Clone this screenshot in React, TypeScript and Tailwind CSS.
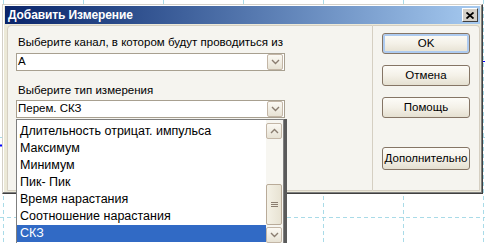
import React from 'react';

const font = { fontFamily: '"Liberation Sans", Arial, sans-serif' };

const Chevron = ({ up = false }: { up?: boolean }) => (
  <svg width="9" height="6" viewBox="0 0 9 6" className="block">
    <path
      d={up ? 'M1 5 L4.5 1.5 L8 5' : 'M1 1 L4.5 4.5 L8 1'}
      fill="none"
      stroke="#8a7d70"
      strokeWidth="1.4"
    />
  </svg>
);

const ArrowBox = ({ up = false, className = '' }: { up?: boolean; className?: string }) => (
  <div
    className={`flex items-center justify-center w-[16px] h-[16px] rounded-[2px] border border-[#c3b6a6] bg-gradient-to-b from-[#fbf9f3] to-[#e7e2d4] ${className}`}
  >
    <Chevron up={up} />
  </div>
);

const Select = ({ value }: { value: string }) => (
  <div className="flex items-center h-[18px] w-[269px] border border-[#a8a090] bg-white pl-[1px] pr-[1px]">
    <span className="flex-1 text-[11.5px] text-black leading-none">{value}</span>
    <ArrowBox />
  </div>
);

const Btn = ({ label, focus = false, h = 'h-[21px]' }: { label: string; focus?: boolean; h?: string }) => (
  <div
    className={`flex items-center justify-center w-[88px] ${h} rounded-[3px] border border-[#857565] bg-gradient-to-b from-[#fdfcf8] via-[#f4f1e8] to-[#e5e0d1] text-[11.5px] text-black ${
      focus ? 'shadow-[inset_0_0_0_2px_#aecbf0]' : ''
    }`}
  >
    {label}
  </div>
);

const items = [
  'Длительность отрицат. импульса',
  'Максимум',
  'Минимум',
  'Пик- Пик',
  'Время нарастания',
  'Соотношение нарастания',
  'СКЗ',
];

export default function App() {
  return (
    <div className="relative w-[485px] h-[243px] overflow-hidden bg-white" style={font}>
      {/* chart grid behind the dialog */}
      <svg className="absolute inset-0" width="485" height="243">
        {[3, 83, 163, 243, 323, 403, 483].map(x => (
          <line key={x} x1={x + 0.5} y1="0" x2={x + 0.5} y2="243" stroke="#a9dbe8" strokeDasharray="4 3" />
        ))}
        {[137, 217].map(y => (
          <line key={y} x1="0" y1={y + 0.5} x2="485" y2={y + 0.5} stroke="#a9dbe8" strokeDasharray="4 3" />
        ))}
        <line x1="482" y1="61.5" x2="485" y2="61.5" stroke="#0000ff" />
        <line x1="0" y1="145.5" x2="3" y2="145.5" stroke="#0000ff" strokeWidth="2" />
      </svg>

      {/* dialog window */}
      <div className="absolute left-[2px] top-[4px] w-[481px] h-[190px] flex flex-col bg-[#ece9d8] border border-[#d4d0c8] border-r-[#404040] border-b-[#404040] shadow-[inset_-1px_-1px_0_#808080,inset_1px_1px_0_#ffffff]">
        <div className="mx-[2px] mt-[1px] h-[18px] flex items-center justify-between pl-[3px] pr-[2px] bg-gradient-to-r from-[#0a246a] to-[#a6caf0]">
          <span className="text-white font-bold text-[12px] tracking-[-0.1px] leading-none">Добавить Измерение</span>
          <div className="flex items-center justify-center w-[16px] h-[14px] bg-[#d4d0c8] border border-[#ffffff] border-r-[#404040] border-b-[#404040]">
            <svg width="8" height="7" viewBox="0 0 8 7">
              <path d="M0.5 0.5 L7.5 6.5 M7.5 0.5 L0.5 6.5" stroke="#000" strokeWidth="1.8" />
            </svg>
          </div>
        </div>

        <div className="flex flex-1 pl-[4px] pr-[2px] pt-[1px] pb-[2px]">
          <div className="w-[366px] flex flex-col bg-[#f5f4ef] border border-[#d5cfc2] rounded-tl-[4px] pl-[8px] pt-[11px]">
            <div className="text-[11.5px] text-black leading-none pl-[2px]">
              Выберите канал, в котором будут проводиться из
            </div>
            <div className="mt-[4px]">
              <Select value="А" />
            </div>
            <div className="mt-[14px] text-[11.5px] text-black leading-none pl-[2px]">Выберите тип измерения</div>
            <div className="mt-[4px]">
              <Select value="Перем. СКЗ" />
            </div>
          </div>
          <div className="flex-1 flex flex-col items-center bg-[#f5f4ef] border border-l-0 border-[#d5cfc2] rounded-tr-[4px] pt-[7px]">
            <Btn label="OK" focus />
            <div className="mt-[11px]">
              <Btn label="Отмена" />
            </div>
            <div className="mt-[11px]">
              <Btn label="Помощь" />
            </div>
            <div className="mt-[29px]">
              <Btn label="Дополнительно" h="h-[23px]" />
            </div>
          </div>
        </div>
      </div>

      {/* open dropdown list */}
      <div className="absolute left-[16px] top-[119px] w-[272px] h-[126px] flex">
        <div className="w-[268px] h-full flex bg-white border border-[#7f7f7f] shadow-[3px_0_0_#5a5a5a]">
          <div className="flex-1 flex flex-col pt-[3px]">
            {items.map((t, i) => (
              <div
                key={t}
                className={`h-[17px] flex items-center pl-[3px] text-[12.5px] leading-none ${
                  i === items.length - 1 ? 'bg-[#316ac5] text-white' : 'text-black'
                }`}
              >
                {t}
              </div>
            ))}
          </div>
          <div className="w-[17px] flex flex-col bg-[#f7f6f1] pt-[3px] pb-[1px]">
            <ArrowBox up />
            <div className="flex-1 flex flex-col justify-end pb-[2px]">
              <div className="h-[41px] w-[16px] rounded-[2px] border border-[#b9ab99] bg-gradient-to-r from-[#f4f1e6] to-[#e8e3d3] flex items-center justify-center">
                <svg width="7" height="6" viewBox="0 0 7 6">
                  <path d="M0 0.5 H7 M0 2.5 H7 M0 4.5 H7" stroke="#8a7d70" />
                </svg>
              </div>
            </div>
            <ArrowBox />
          </div>
        </div>
      </div>
    </div>
  );
}
